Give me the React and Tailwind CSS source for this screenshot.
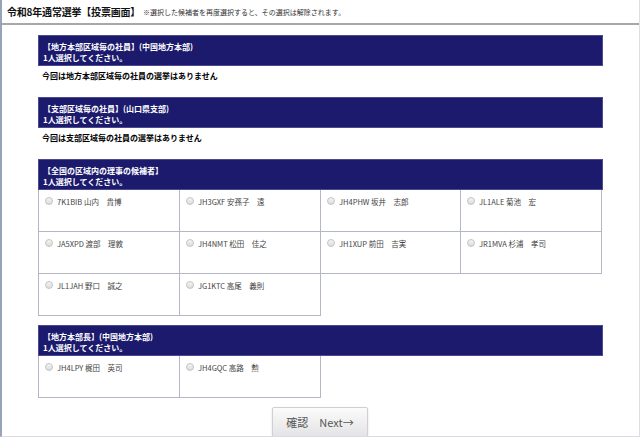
import React from 'react';

const jp = { fontFamily: '"Noto Sans CJK JP", "Noto Sans", sans-serif' };

const sections = [
  {
    title: '【地方本部区域毎の社員】(中国地方本部)',
    empty: '今回は地方本部区域毎の社員の選挙はありません',
  },
  {
    title: '【支部区域毎の社員】(山口県支部)',
    empty: '今回は支部区域毎の社員の選挙はありません',
  },
  {
    title: '【全国の区域内の理事の候補者】',
    candidates: [
      '7K1BIB 山内　貴博',
      'JH3GXF 安孫子　遠',
      'JH4PHW 坂井　志郎',
      'JL1ALE 菊池　宏',
      'JA5XPD 渡部　理敦',
      'JH4NMT 松田　佳之',
      'JH1XUP 前田　吉実',
      'JR1MVA 杉浦　孝司',
      'JL1JAH 野口　誠之',
      'JG1KTC 高尾　義則',
    ],
  },
  {
    title: '【地方本部長】(中国地方本部)',
    candidates: ['JH4LPY 梶田　英司', 'JH4GQC 高路　勲'],
  },
];

function Radio() {
  return (
    <span className="inline-block w-[8px] h-[8px] rounded-full border border-[#c4c4c4] bg-gradient-to-b from-[#f4f4f4] to-[#dcdcdc] shrink-0" />
  );
}

function Section({ section }) {
  return (
    <div className="mb-[9px]">
      <div className="h-[31px] bg-[#1b1a6d] border border-[#4b4a8e] px-[4px] pt-[5px] text-white font-bold text-[8px] leading-[11px]">
        <div>{section.title}</div>
        <div>1人選択してください。</div>
      </div>
      {section.empty ? (
        <div className="h-[22px] pt-[4px] pl-[4px] text-[8px] font-bold text-black leading-[11px]">{section.empty}</div>
      ) : (
        <div className="grid grid-cols-[141px_141px_140px_141px] w-[563px]">
          {section.candidates.map((c) => (
            <div key={c} className="h-[42px] border-l border-b border-r border-[#b4b8c4] -mr-px flex items-start gap-[4px] pl-[6px] pt-[7px]">
              <Radio />
              <span className="text-[7.5px] leading-[9px] text-[#444]">{c}</span>
            </div>
          ))}
        </div>
      )}
    </div>
  );
}

export default function App() {
  return (
    <div style={jp} className="w-[640px] h-[437px] overflow-hidden bg-white border-l-2 border-l-[#97a3b6] border-r border-r-[#dddde6] border-b border-b-[#dcd8e8] flex flex-col">
      <div className="h-[25px] border-b-2 border-[#a8a8a8] flex items-center pl-[5px] gap-[3px] shrink-0">
        <span className="text-[10px] font-bold text-[#111] tracking-[-0.2px]">令和8年通常選挙【投票画面】</span>
        <span className="text-[7px] text-[#333] pt-[1px]">※選択した候補者を再度選択すると、その選択は解除されます。</span>
      </div>
      <div className="pl-[36px] pt-[10px] w-[601px]">
        {sections.map((s) => (
          <Section key={s.title} section={s} />
        ))}
      </div>
      <div className="flex justify-center mt-auto">
        <button className="w-[96px] h-[30px] ml-[-1px] border border-[#cfcfd4] rounded-[2px] bg-gradient-to-b from-[#fbfbfb] to-[#e4e4e6] text-[11px] text-[#555] shadow-[0_1px_2px_rgba(0,0,0,0.15)]">
          確認　Next→
        </button>
      </div>
    </div>
  );
}
